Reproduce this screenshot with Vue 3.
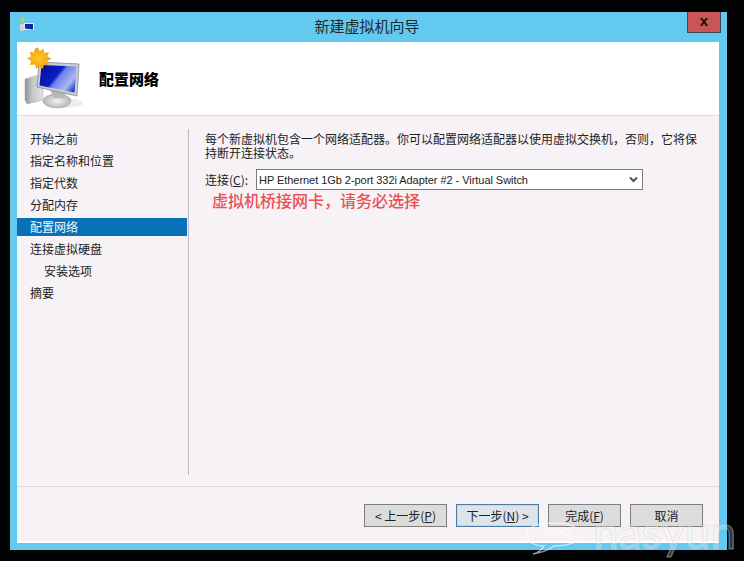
<script setup>
const steps = [
  { label: '开始之前' },
  { label: '指定名称和位置' },
  { label: '指定代数' },
  { label: '分配内存' },
  { label: '配置网络', active: true },
  { label: '连接虚拟硬盘' },
  { label: '安装选项', sub: true },
  { label: '摘要' },
]
const sunPoints = '15,0 17.500,5 22,1.500 23,7 29,6 27,11.500 32,14 27,17 29,22.500 23,21.500 21,27 17,23 13,27 11.500,21.500 5,22 7,17 1.500,14 6.500,11.500 5,6 10,6.500 11.500,1.500'
</script>

<template>
  <div class="desktop">
    <div class="window">
      <div class="titlebar">
        <svg class="app-icon" width="16" height="16" viewBox="0 0 16 16">
          <circle cx="3.500" cy="3" r="2" fill="#f2c230" />
          <rect x="1" y="7" width="3.500" height="7" fill="#d4d6cf" />
          <path d="M4.500 6 H15 V13 H4.500 Z" fill="#dfe6ee" />
          <path d="M6 7 H14 V12.500 L6 11.500 Z" fill="#12289c" />
          <path d="M5 14 H13 V15 H5 Z" fill="#aab0b4" />
        </svg>
        <span class="title">新建虚拟机向导</span>
        <button class="close" type="button">x</button>
      </div>
      <div class="client">
        <header class="head">
          <svg class="hero" width="62" height="64" viewBox="0 0 62 64">
            <defs>
              <linearGradient id="scr" x1="0" y1="0.2" x2="1" y2="0.8">
                <stop offset="0" stop-color="#04129c" />
                <stop offset="0.42" stop-color="#0b1fc4" />
                <stop offset="0.5" stop-color="#6c80ea" />
                <stop offset="0.8" stop-color="#aab8f6" />
                <stop offset="1" stop-color="#1e35c8" />
              </linearGradient>
              <linearGradient id="tower" x1="0" y1="0" x2="1" y2="0">
                <stop offset="0" stop-color="#8e928e" />
                <stop offset="0.4" stop-color="#c4c8c4" />
                <stop offset="1" stop-color="#dfe2df" />
              </linearGradient>
              <radialGradient id="sun">
                <stop offset="0" stop-color="#ffc81e" />
                <stop offset="1" stop-color="#f2a018" />
              </radialGradient>
              <radialGradient id="base">
                <stop offset="0" stop-color="#f4f4f4" />
                <stop offset="1" stop-color="#b4b8b8" />
              </radialGradient>
            </defs>
            <path d="M1 33 L15 29 L19 31 V54 L3 58 L1 54 Z" fill="url(#tower)" stroke="#a4a8a4" stroke-width="0.5" />
            <ellipse cx="40" cy="57" rx="19" ry="5" fill="#dedede" opacity="0.55" />
            <ellipse cx="33" cy="55" rx="14" ry="7" fill="url(#base)" stroke="#a6aaaa" stroke-width="0.6" />
            <path d="M26 44 L42 47 L40 52 H30 Z" fill="#b4b8b8" />
            <path d="M15 16 L55 18 L53 50 L13 41 Z" fill="#c8ccd4" stroke="#85898f" stroke-width="0.8" />
            <path d="M17.500 19 L52.500 20.500 L50.500 46.500 L15.500 39.500 Z" fill="url(#scr)" />
            <polygon :points="sunPoints" fill="url(#sun)" transform="translate(1.800 1.300) scale(0.8)" />
          </svg>
          <h1 class="heading">配置网络</h1>
        </header>
        <div class="body">
          <nav class="steps">
            <div
              v-for="step in steps"
              :key="step.label"
              class="step"
              :class="{ active: step.active, sub: step.sub }"
            >{{ step.label }}</div>
          </nav>
          <main class="content">
            <p class="desc">每个新虚拟机包含一个网络适配器。你可以配置网络适配器以使用虚拟交换机，否则，它将保持断开连接状态。</p>
            <div class="conn">
              <span class="conn-label">连接(<u>C</u>):</span>
              <div class="select">
                <span>HP Ethernet 1Gb 2-port 332i Adapter #2 - Virtual Switch</span>
                <svg width="9" height="7" viewBox="0 0 9 7">
                  <path d="M1 1.500 L4.500 5 L8 1.500" fill="none" stroke="#4d5560" stroke-width="2" />
                </svg>
              </div>
            </div>
            <div class="note">虚拟机桥接网卡，请务必选择</div>
          </main>
        </div>
        <footer class="foot">
          <button class="btn wide" type="button">&lt; 上一步(<u>P</u>)</button>
          <button class="btn wide default" type="button">下一步(<u>N</u>) &gt;</button>
          <button class="btn" type="button">完成(<u>F</u>)</button>
          <button class="btn" type="button">取消</button>
        </footer>
      </div>
    </div>
    <div class="mark">
      <svg width="58" height="42" viewBox="0 0 58 42">
        <path d="M7 41 Q15 39 18 33 C8 33 1 29 1 21 C1 14 12 10 28 10 C44 10 54 15 54 22 C54 29 42 33 28 33 Q20 39 7 41 Z" fill="none" stroke="#fff" stroke-width="1.500" opacity="0.6" />
        <circle cx="21" cy="19" r="3.500" fill="none" stroke="#fff" stroke-width="1.500" opacity="0.5" />
        <circle cx="31" cy="19" r="3.500" fill="none" stroke="#fff" stroke-width="1.500" opacity="0.5" />
        <circle cx="41" cy="19" r="3.500" fill="none" stroke="#fff" stroke-width="1.500" opacity="0.5" />
      </svg>
      <span class="mark-text">nasyun</span>
    </div>
  </div>
</template>

<style scoped>
.desktop {
  position: relative;
  width: 744px;
  height: 561px;
  padding: 12px 0 0 10px;
  box-sizing: border-box;
  background: #020204;
  overflow: hidden;
  font-family: "Noto Sans CJK SC", "Liberation Sans", sans-serif;
  font-size: 12px;
  color: #1a1a1a;
}
.window {
  width: 717px;
  height: 538px;
  padding: 0 8px 7px 7px;
  box-sizing: border-box;
  background: #63c9ee;
  display: flex;
  flex-direction: column;
}
.titlebar {
  flex: 0 0 30px;
  box-sizing: border-box;
  padding-bottom: 2px;
  position: relative;
  display: flex;
  align-items: center;
  justify-content: center;
}
.app-icon {
  position: absolute;
  left: 2px;
  top: 5px;
}
.title {
  font-size: 15px;
  color: #202830;
  margin-right: 2px;
  line-height: 28px;
}
.close {
  position: absolute;
  right: -2px;
  top: 0;
  width: 34px;
  height: 21px;
  padding: 0 0 3px;
  border: 1px solid #3c4a54;
  border-top: 0;
  background: #c75654;
  color: #1a0808;
  font: bold 15px "Liberation Sans", sans-serif;
  line-height: 16px;
}
.client {
  flex: 1;
  min-height: 0;
  display: flex;
  flex-direction: column;
  background: #f6f2f6;
  border-bottom: 2px solid #fff;
}
.head {
  flex: 0 0 74px;
  box-sizing: border-box;
  background: #fff;
  border-bottom: 1px solid #dcdcdc;
  display: flex;
  align-items: center;
  position: relative;
}
.hero {
  position: absolute;
  left: 7px;
  top: 4px;
}
.heading {
  margin: 0 0 0 82px;
  font-size: 15px;
  font-weight: 900;
  color: #000;
  line-height: 20px;
}
.body {
  flex: 1;
  min-height: 0;
  display: flex;
  border-bottom: 1px solid #dcdadc;
}
.steps {
  box-sizing: border-box;
  width: 172px;
  height: 346px;
  margin-top: 13px;
  padding-top: 1px;
  border-right: 1px solid #b9b9bd;
}
.step {
  height: 18px;
  line-height: 18px;
  margin-bottom: 4px;
  padding-left: 13px;
  color: #222;
}
.step.sub {
  padding-left: 27px;
}
.step.active {
  background: #0872b8;
  color: #eef6fc;
  margin-right: 1px;
}
.content {
  flex: 1;
  padding: 16px 0 0 16px;
  min-width: 0;
}
.desc {
  margin: 0;
  width: 494px;
  line-height: 14px;
  color: #222;
}
.conn {
  display: flex;
  align-items: center;
  margin-top: 9px;
}
.conn-label {
  width: 51px;
  color: #222;
}
.select {
  box-sizing: border-box;
  width: 387px;
  height: 21px;
  border: 1px solid #7a7a7a;
  background: #fff;
  display: flex;
  align-items: center;
  justify-content: space-between;
  padding: 0 4px 0 2px;
  font-family: "Liberation Sans", sans-serif;
  font-size: 11px;
  letter-spacing: -0.05px;
  color: #222;
}
.note {
  margin: 0 0 0 7px;
  font-size: 16px;
  font-weight: 500;
  line-height: 20px;
  color: #ea4f55;
}
.foot {
  flex: 0 0 54px;
  box-sizing: border-box;
  display: flex;
  justify-content: flex-end;
  gap: 9px;
  padding: 17px 16px 0 0;
}
.btn {
  box-sizing: border-box;
  width: 73px;
  height: 23px;
  padding: 0;
  border: 1px solid #7e7e7e;
  background: #dcdcdc;
  font-family: "Noto Sans CJK SC", sans-serif;
  font-size: 12px;
  line-height: 19px;
  color: #222;
}
.btn.wide {
  width: 83px;
}
.btn.default {
  border-color: #4d7da6;
  background: #dde4ea;
  box-shadow: inset 0 0 0 1px #b9dcf2;
}
.mark {
  position: absolute;
  left: 526px;
  top: 512px;
  display: flex;
  align-items: flex-end;
  gap: 9px;
  pointer-events: none;
}
.mark-text {
  font-family: "Lato", sans-serif;
  font-size: 46px;
  line-height: 40px;
  font-weight: 400;
  margin-bottom: 3px;
  color: rgba(255, 255, 255, 0.22);
  -webkit-text-stroke: 1px rgba(215, 215, 215, 0.5);
}
</style>
